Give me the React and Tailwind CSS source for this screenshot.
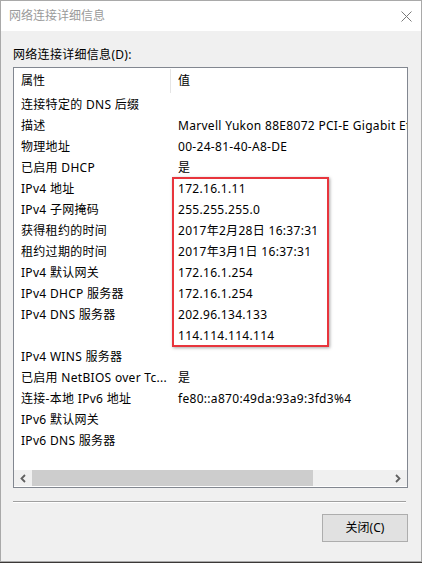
import React from "react";

const FONT = { fontFamily: '"Segoe UI", "Noto Sans", "Noto Sans CJK SC", sans-serif' };

const ROWS = [
  ["连接特定的 DNS 后缀", ""],
  ["描述", "Marvell Yukon 88E8072 PCI-E Gigabit Ethernet Controller"],
  ["物理地址", "00-24-81-40-A8-DE"],
  ["已启用 DHCP", "是"],
  ["IPv4 地址", "172.16.1.11"],
  ["IPv4 子网掩码", "255.255.255.0"],
  ["获得租约的时间", "2017年2月28日 16:37:31"],
  ["租约过期的时间", "2017年3月1日 16:37:31"],
  ["IPv4 默认网关", "172.16.1.254"],
  ["IPv4 DHCP 服务器", "172.16.1.254"],
  ["IPv4 DNS 服务器", "202.96.134.133"],
  ["", "114.114.114.114"],
  ["IPv4 WINS 服务器", ""],
  ["已启用 NetBIOS over Tc...", "是"],
  ["连接-本地 IPv6 地址", "fe80::a870:49da:93a9:3fd3%4"],
  ["IPv6 默认网关", ""],
  ["IPv6 DNS 服务器", ""],
];

function Chevron({ dir }) {
  return (
    <svg width="8" height="9" viewBox="0 0 8 9">
      <path
        d={dir === "left" ? "M6 1 L2.5 4.5 L6 8" : "M2 1 L5.5 4.5 L2 8"}
        fill="none"
        stroke="#606060"
        strokeWidth="1.8"
      />
    </svg>
  );
}

export default function App() {
  return (
    <div className="w-[422px] h-[563px] bg-[#3b3836] overflow-hidden text-black" style={FONT}>
      <div className="relative w-[422px] h-[562px] border border-[#a9a9a9] bg-[#f0f0f0] flex flex-col">
        {/* title bar */}
        <div className="h-[30px] bg-white flex items-center justify-between pl-[8px] pr-[9px] shrink-0">
          <span className="text-[12px] text-[#9a9a9a]">网络连接详细信息</span>
          <svg width="11" height="11" viewBox="0 0 11 11">
            <path d="M0.5 0.5 L10.5 10.5 M10.5 0.5 L0.5 10.5" stroke="#7a7a7a" strokeWidth="1" />
          </svg>
        </div>

        <div className="flex flex-col px-[12px] pt-[16px]">
          <div className="text-[12px] leading-[16px] h-[20px] tracking-[0.3px]">网络连接详细信息(D):</div>

          {/* list box */}
          <div className="w-[395px] h-[421px] border border-[#828790] bg-white flex flex-col overflow-hidden">
            <div className="h-[26px] flex items-center text-[12px] shrink-0">
              <div className="w-[156px] pl-[7px]">属性</div>
              <div className="w-px h-[24px] bg-[#e5e5e5]" />
              <div className="pl-[7px]">值</div>
            </div>
            <div className="flex-1 flex flex-col min-h-0">
              {ROWS.map(([k, v], i) => (
                <div key={i} className="h-[21px] shrink-0 flex items-center text-[12px] tracking-[0.3px] whitespace-nowrap">
                  <div className="w-[164px] pl-[7px] shrink-0 overflow-hidden">{k}</div>
                  <div className="shrink-0">{v}</div>
                </div>
              ))}
            </div>
            {/* horizontal scrollbar */}
            <div className="h-[16px] mb-px shrink-0 bg-[#f0f0f0] flex items-stretch">
              <div className="w-[18px] shrink-0 flex items-center justify-center">
                <Chevron dir="left" />
              </div>
              <div className="w-[281px] h-[16px] shrink-0 bg-[#cdcdcd]" />
              <div className="flex-1" />
              <div className="w-[18px] shrink-0 flex items-center justify-center">
                <Chevron dir="right" />
              </div>
            </div>
          </div>

          {/* separator */}
          <div className="mt-[13px] w-[393px] h-px bg-[#a0a0a0]" />
          <div className="w-[393px] h-px bg-white" />

          <div className="flex justify-end pt-[11px] pr-px">
            <button className="w-[86px] h-[28px] bg-[#e1e1e1] border border-[#adadad] text-[12px]">
              关闭(C)
            </button>
          </div>
        </div>

        {/* highlight box */}
        <div className="absolute left-[171px] top-[176px] w-[157px] h-[170px] border-2 border-[#e8353d] shadow-[1px_1px_3px_rgba(0,0,0,0.35)]" />
      </div>
    </div>
  );
}
